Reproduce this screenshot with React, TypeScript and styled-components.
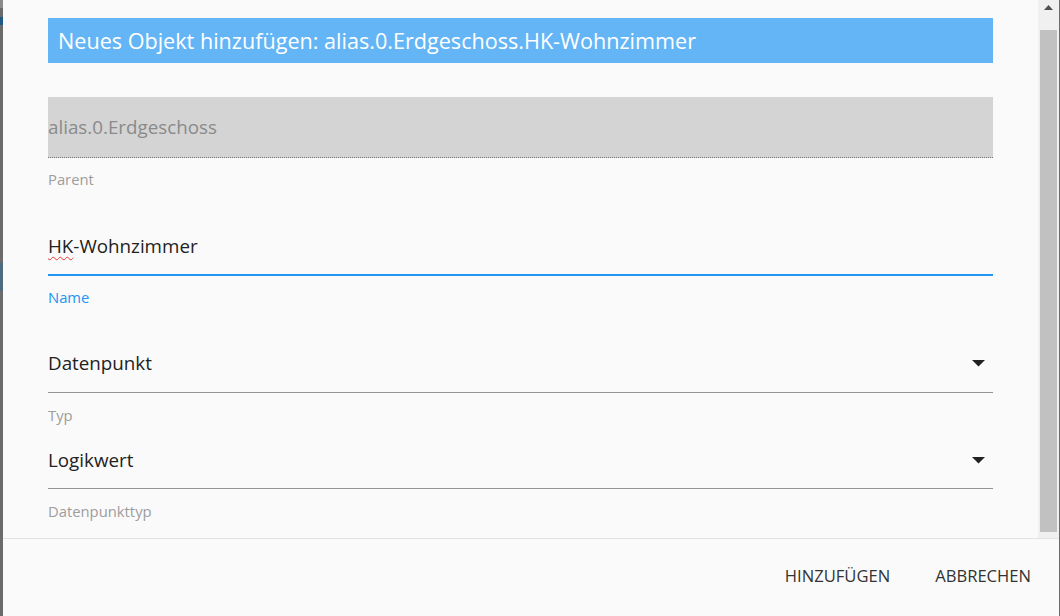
import React from "react";
import styled, { createGlobalStyle } from "styled-components";

const Global = createGlobalStyle`
  html, body { margin: 0; padding: 0; background: #6b6b6b; }
  body { font-family: "Open Sans", "Noto Sans", sans-serif; }
  * { box-sizing: border-box; }
`;

const Page = styled.div`
  display: flex;
  width: 1060px;
  height: 616px;
  overflow: hidden;
`;

const Backdrop = styled.div`
  width: 3px;
  flex: none;
  background: linear-gradient(
    to bottom,
    #8a8a8a 0px, #8a8a8a 8px,
    #6b6b6b 8px, #6b6b6b 17px,
    #1f5a87 17px, #1f5a87 25px,
    #6b6b6b 25px, #6b6b6b 263px,
    #4f6b80 263px, #4f6b80 291px,
    #6b6b6b 291px
  );
`;

const EdgeRight = styled.div`
  width: 1px;
  flex: none;
  background: #6b6b6b;
`;

const Dialog = styled.div`
  flex: 1;
  display: flex;
  flex-direction: column;
  background: #fafafa;
`;

const Body = styled.div`
  height: 538px;
  display: flex;
`;

const Content = styled.div`
  flex: 1;
  padding: 18px 45px 0 45px;
  display: flex;
  flex-direction: column;
`;

const Scrollbar = styled.div`
  width: 21px;
  flex: none;
  background: #f0f0f0;
  display: flex;
  flex-direction: column;
  align-items: center;
  padding: 0 2px 6px 2px;
`;

const ScrollArrow = styled.div`
  height: 12px;
  display: flex;
  align-items: center;
  justify-content: center;
  padding-top: 2px;
`;

const ScrollThumb = styled.div`
  margin-top: 18px;
  flex: 1;
  width: 17px;
  background: #c1c1c1;
`;

const Title = styled.div`
  height: 45px;
  background: #64b5f6;
  color: #ffffff;
  font-size: 21.6px;
  display: flex;
  align-items: center;
  padding-left: 10px;
  white-space: nowrap;
`;

const Field = styled.div<{ $gap: number }>`
  margin-top: ${(p) => p.$gap}px;
  display: flex;
  flex-direction: column;
`;

const Control = styled.div<{ $h: number; $disabled?: boolean; $focused?: boolean }>`
  height: ${(p) => p.$h}px;
  display: flex;
  align-items: center;
  justify-content: space-between;
  font-size: 18.8px;
  color: ${(p) => (p.$disabled ? "#8a8a8a" : "#222222")};
  background: ${(p) => (p.$disabled ? "#d4d4d4" : "transparent")};
  border-bottom: ${(p) =>
    p.$disabled
      ? "1px dotted #777777"
      : p.$focused
      ? "2px solid #2196f3"
      : "1px solid #949494"};
`;

const Spell = styled.span`
  text-decoration: underline wavy #e53935;
  text-decoration-thickness: 1px;
  text-underline-offset: 3px;
`;

const Label = styled.div<{ $focused?: boolean; $top: number }>`
  margin-top: ${(p) => p.$top}px;
  font-size: 14.8px;
  line-height: 20px;
  color: ${(p) => (p.$focused ? "#2196f3" : "#9d9d9d")};
`;

const Arrow = styled.svg`
  margin-right: 8px;
`;

const Footer = styled.div`
  flex: 1;
  border-top: 1px solid #e2e2e2;
  display: flex;
  justify-content: flex-end;
  align-items: center;
  padding-right: 20px;
  padding-bottom: 4px;
  gap: 29px;
`;

const Button = styled.button`
  border: none;
  background: transparent;
  font-family: "Open Sans", "Noto Sans", sans-serif;
  font-size: 16.6px;
  color: #333333;
  padding: 8px 8px;
  text-transform: uppercase;
`;

const DropArrow = () => (
  <Arrow width="13" height="7" viewBox="0 0 13 7">
    <polygon points="0,0 13,0 6.5,6.5" fill="#212121" />
  </Arrow>
);

export default function App() {
  return (
    <Page>
      <Global />
      <Backdrop />
      <Dialog>
        <Body>
          <Content>
            <Title>Neues Objekt hinzufügen: alias.0.Erdgeschoss.HK-Wohnzimmer</Title>
            <Field $gap={34}>
              <Control $h={61} $disabled>alias.0.Erdgeschoss</Control>
              <Label $top={11}>Parent</Label>
            </Field>
            <Field $gap={29}>
              <Control $h={58} $focused>
                <span>
                  <Spell>HK</Spell>-Wohnzimmer
                </span>
              </Control>
              <Label $top={11} $focused>Name</Label>
            </Field>
            <Field $gap={27}>
              <Control $h={59}>
                <span>Datenpunkt</span>
                <DropArrow />
              </Control>
              <Label $top={12}>Typ</Label>
            </Field>
            <Field $gap={7}>
              <Control $h={57}>
                <span>Logikwert</span>
                <DropArrow />
              </Control>
              <Label $top={12}>Datenpunkttyp</Label>
            </Field>
          </Content>
          <Scrollbar>
            <ScrollArrow>
              <svg width="9" height="5" viewBox="0 0 9 5">
                <polygon points="4.5,0 9,5 0,5" fill="#505050" />
              </svg>
            </ScrollArrow>
            <ScrollThumb />
          </Scrollbar>
        </Body>
        <Footer>
          <Button>Hinzufügen</Button>
          <Button>Abbrechen</Button>
        </Footer>
      </Dialog>
      <EdgeRight />
    </Page>
  );
}
